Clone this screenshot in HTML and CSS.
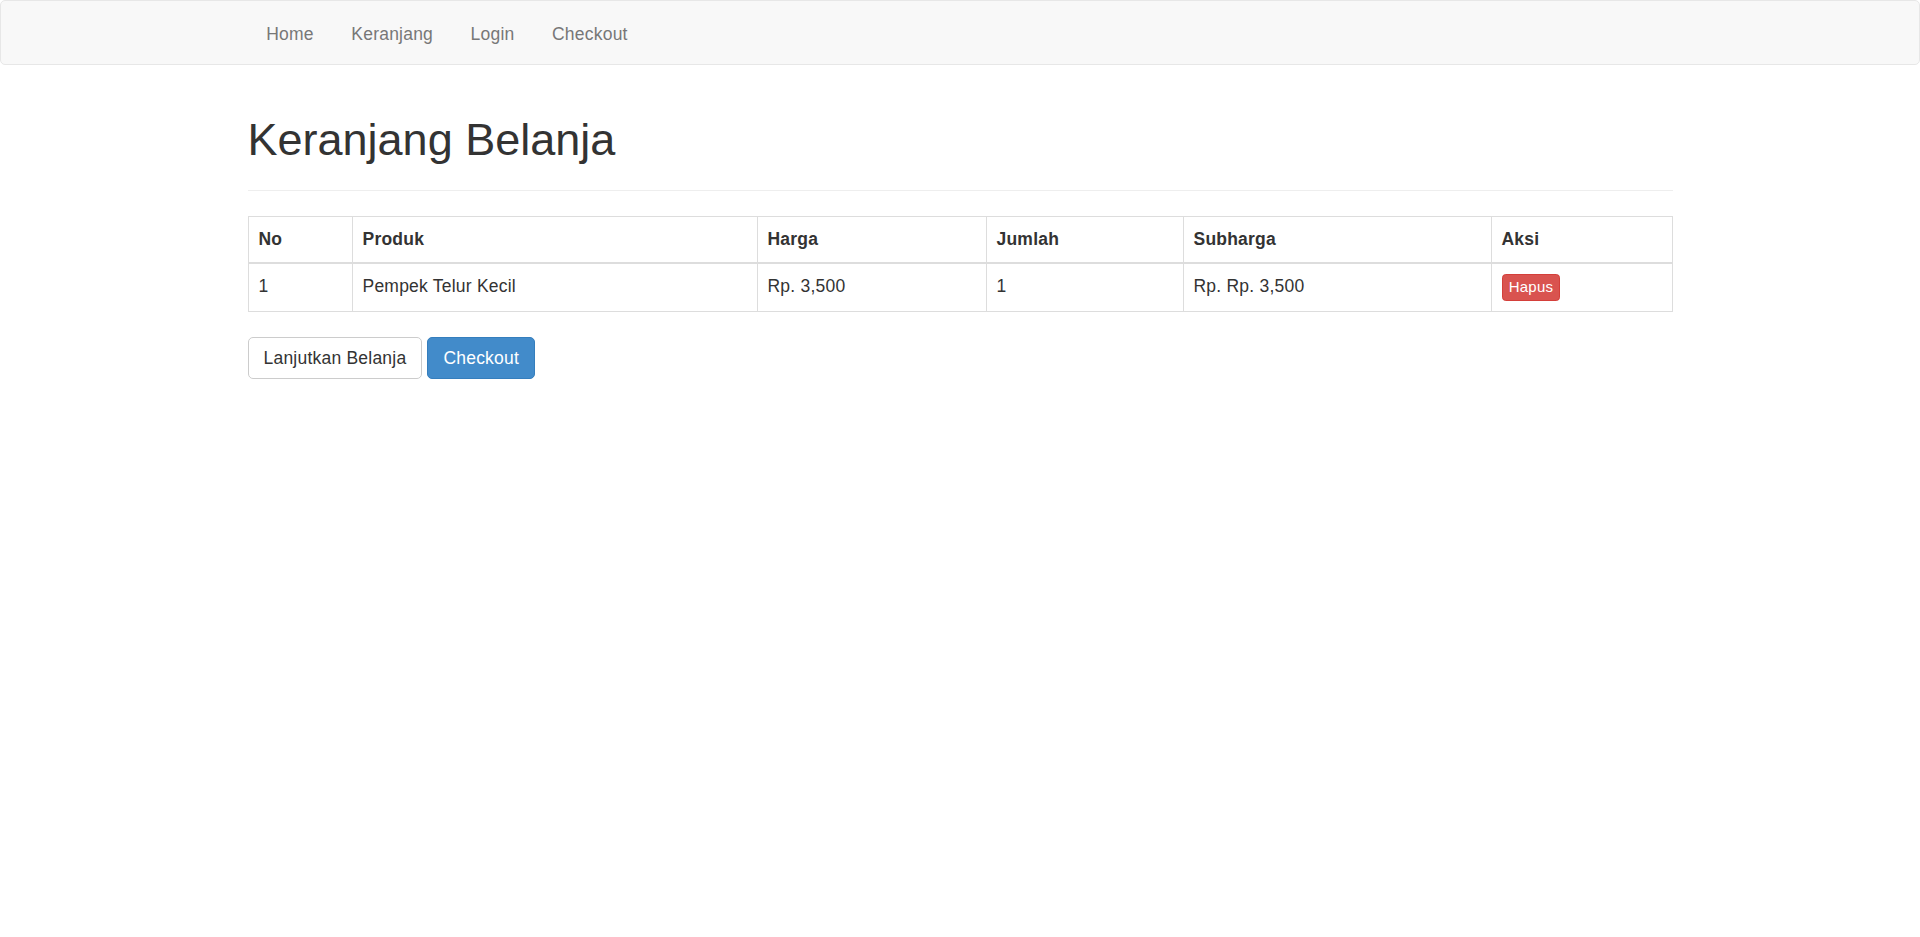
FILE: index.html
```html
<!DOCTYPE html>
<html lang="id">
<head>
<meta charset="utf-8">
<title>Keranjang Belanja</title>
<link rel="stylesheet" href="styles.css">
</head>
<body>
<nav class="navbar">
  <div class="container">
    <ul class="nav-list">
      <li><a href="#">Home</a></li>
      <li><a href="#">Keranjang</a></li>
      <li><a href="#">Login</a></li>
      <li><a href="#">Checkout</a></li>
    </ul>
  </div>
</nav>
<div class="container">
  <div class="page-header">
    <h1>Keranjang Belanja</h1>
  </div>
  <table class="cart-table">
    <thead>
      <tr>
        <th class="col-no">No</th>
        <th class="col-produk">Produk</th>
        <th class="col-harga">Harga</th>
        <th class="col-jumlah">Jumlah</th>
        <th class="col-subharga">Subharga</th>
        <th class="col-aksi">Aksi</th>
      </tr>
    </thead>
    <tbody>
      <tr>
        <td>1</td>
        <td>Pempek Telur Kecil</td>
        <td>Rp. 3,500</td>
        <td>1</td>
        <td>Rp. Rp. 3,500</td>
        <td><a href="#" class="btn btn-danger btn-xs">Hapus</a></td>
      </tr>
    </tbody>
  </table>
  <div class="actions">
    <a href="#" class="btn btn-default">Lanjutkan Belanja</a>
    <a href="#" class="btn btn-primary">Checkout</a>
  </div>
</div>
</body>
</html>
```
FILE: styles.css
```css
* {
  box-sizing: border-box;
}
html, body {
  margin: 0;
  padding: 0;
}
body {
  font-family: "Liberation Sans", Arial, Helvetica, sans-serif;
  font-size: 17.5px;
  line-height: 25px;
  letter-spacing: 0.22px;
  color: #333;
  background: #fff;
}
a {
  text-decoration: none;
}
.container {
  width: 1462.5px;
  margin: 0 auto;
  padding: 0 18.75px;
}
.navbar {
  min-height: 63px;
  margin-bottom: 25px;
  background: #f8f8f8;
  border: 1px solid #e7e7e7;
  border-radius: 5px;
}
.nav-list {
  list-style: none;
  margin: 0;
  padding: 0;
  display: flex;
}
.nav-list a {
  display: block;
  padding: 20.5px 18.75px 17.5px;
  line-height: 25px;
  color: #777;
}
.page-header {
  margin: 50px 0 25px;
  padding-bottom: 13px;
  border-bottom: 1px solid #eee;
}
.page-header h1 {
  margin: 25px 0 12.5px;
  font-size: 45px;
  line-height: 1.1;
  font-weight: 500;
  letter-spacing: 0;
  color: #333;
}
.cart-table {
  width: 100%;
  border-collapse: collapse;
  border-spacing: 0;
  margin-bottom: 25px;
  border: 1px solid #ddd;
}
.cart-table th,
.cart-table td {
  padding: 10px;
  line-height: 25px;
  border: 1px solid #ddd;
  text-align: left;
  vertical-align: top;
}
.cart-table th {
  font-weight: bold;
  vertical-align: bottom;
  border-bottom: 2px solid #ddd;
}
.col-no { width: 104px; }
.col-produk { width: 405px; }
.col-harga { width: 229px; }
.col-jumlah { width: 197px; }
.col-subharga { width: 308px; }
.col-aksi { width: 181px; }
.btn {
  display: inline-block;
  padding: 7.5px 15px;
  font-size: 17.5px;
  line-height: 25px;
  border: 1px solid transparent;
  border-radius: 5px;
  vertical-align: middle;
  text-align: center;
  white-space: nowrap;
}
.btn-default {
  color: #333;
  background: #fff;
  border-color: #ccc;
}
.btn-primary {
  color: #fff;
  background: #428bca;
  border-color: #357ebd;
}
.btn-danger {
  color: #fff;
  background: #d9534f;
  border-color: #d43f3a;
}
.btn-xs {
  padding: 1.25px 6.25px;
  font-size: 15px;
  line-height: 22.5px;
  border-radius: 3.75px;
}
.actions {
  display: flex;
  gap: 5px;
}
```
